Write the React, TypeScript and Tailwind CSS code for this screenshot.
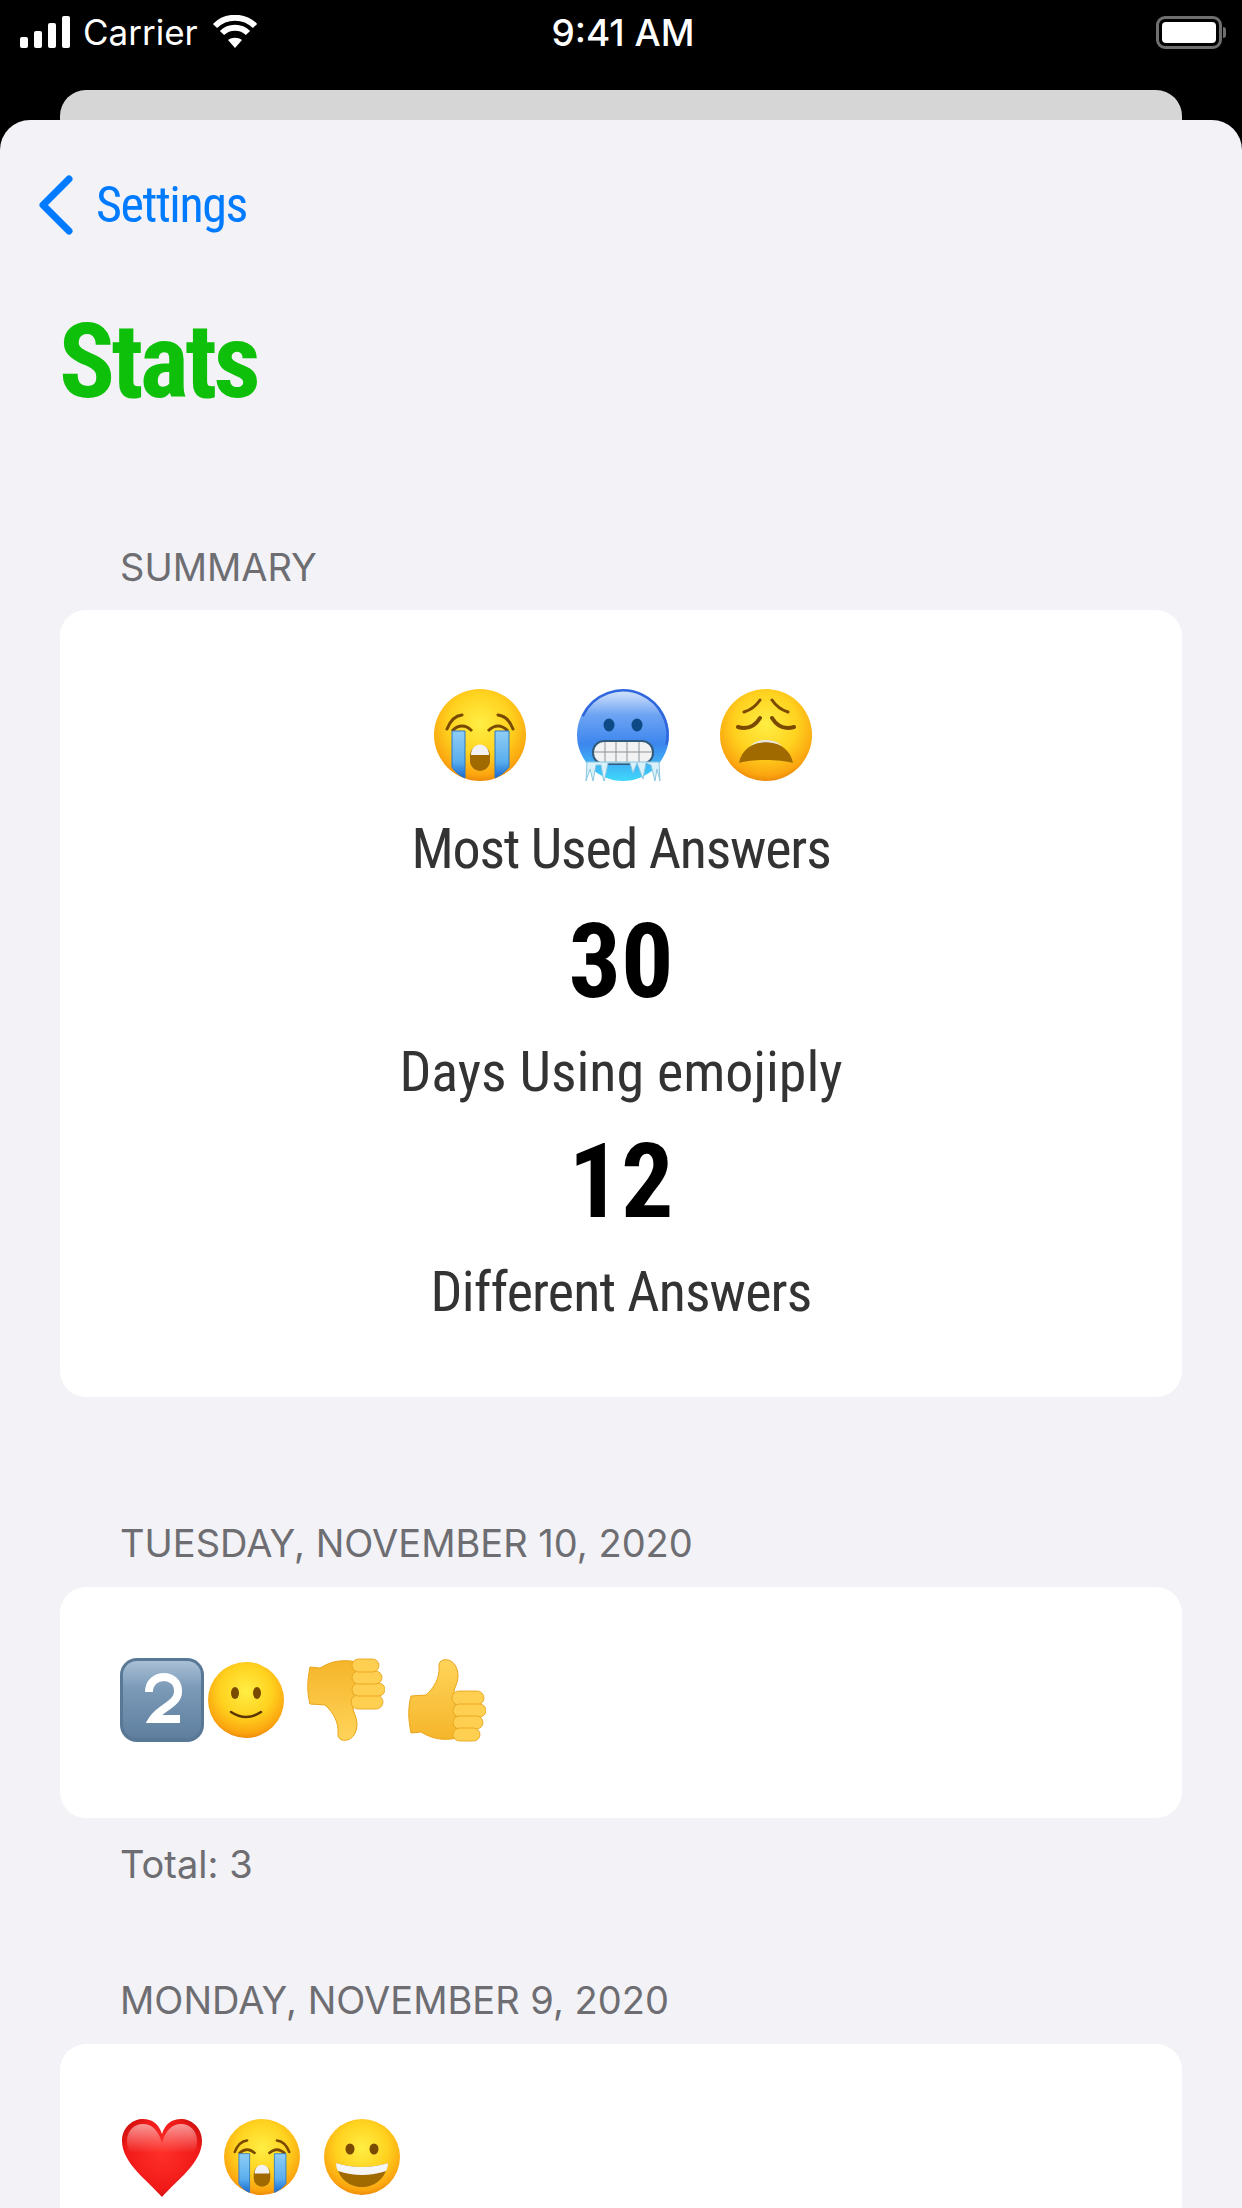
import { ReactNode } from 'react';

const condensed = "font-['Liberation_Sans_Narrow','Roboto_Condensed','Liberation_Sans',sans-serif]";
const plain = "font-['Inter','Liberation_Sans',sans-serif]";

function Defs() {
  return (
    <svg width="0" height="0" className="absolute">
      <defs>
        <radialGradient id="face" cx="50%" cy="38%" r="62%">
          <stop offset="0%" stopColor="#ffee44" />
          <stop offset="55%" stopColor="#ffd21f" />
          <stop offset="90%" stopColor="#fba50f" />
          <stop offset="100%" stopColor="#ee8a0a" />
        </radialGradient>
        <linearGradient id="cold" x1="0" y1="0" x2="0" y2="1">
          <stop offset="0%" stopColor="#dbe8fc" />
          <stop offset="28%" stopColor="#6ea4f3" />
          <stop offset="60%" stopColor="#3c86ee" />
          <stop offset="100%" stopColor="#3fd8fb" />
        </linearGradient>
        <linearGradient id="tear" x1="0" y1="0" x2="0" y2="1">
          <stop offset="0%" stopColor="#8fcdf5" />
          <stop offset="65%" stopColor="#5aaeee" />
          <stop offset="100%" stopColor="#1769d0" />
        </linearGradient>
        <linearGradient id="key" x1="0" y1="0" x2="0" y2="1">
          <stop offset="0%" stopColor="#a9c0d6" />
          <stop offset="35%" stopColor="#7b9ab8" />
          <stop offset="100%" stopColor="#5f7f9e" />
        </linearGradient>
        <linearGradient id="thumb" x1="0" y1="0" x2="0" y2="1">
          <stop offset="0%" stopColor="#ffd45a" />
          <stop offset="100%" stopColor="#f5b52a" />
        </linearGradient>
        <radialGradient id="heart" cx="50%" cy="45%" r="60%">
          <stop offset="0%" stopColor="#ff2f28" />
          <stop offset="75%" stopColor="#f01a18" />
          <stop offset="100%" stopColor="#c40d0d" />
        </radialGradient>
        <linearGradient id="shine" x1="0" y1="0" x2="0" y2="1">
          <stop offset="0%" stopColor="#ffffff" stopOpacity="0.55" />
          <stop offset="100%" stopColor="#ffffff" stopOpacity="0" />
        </linearGradient>
      </defs>
    </svg>
  );
}

function Crying({ size }: { size: number }) {
  return (
    <svg width={size} height={size} viewBox="0 0 92 92">
      <circle cx="46" cy="46" r="46" fill="url(#face)" />
      <path d="M13 40 Q18 27 28 26 M79 40 Q74 27 64 26" stroke="#7a4a00" strokeWidth="3" fill="none" strokeLinecap="round" />
      <path d="M18 42 Q28 32 38 42 M54 42 Q64 32 74 42" stroke="#7a4a00" strokeWidth="3" fill="none" />
      <path d="M18 42 H31 V89 Q22 85 18 78 Z" fill="url(#tear)" stroke="#2a78c8" strokeWidth="1" />
      <path d="M61 42 H75 V78 Q70 85 61 89 Z" fill="url(#tear)" stroke="#2a78c8" strokeWidth="1" />
      <rect x="36" y="56" width="20" height="26" rx="10" fill="#a06a00" />
      <path d="M37 66 C37 52 55 52 55 66 Z" fill="#f2f2f2" />
    </svg>
  );
}

function Cold({ size }: { size: number }) {
  return (
    <svg width={size} height={size} viewBox="0 0 92 92">
      <circle cx="46" cy="46" r="46" fill="url(#cold)" />
      <circle cx="46" cy="46" r="44.5" fill="none" stroke="#2f66dc" strokeWidth="2.5" strokeDasharray="130 160" transform="rotate(-155 46 46)" />
      <ellipse cx="32" cy="36" rx="5.5" ry="6.5" fill="#0d4a86" />
      <ellipse cx="60" cy="36" rx="5.5" ry="6.5" fill="#0d4a86" />
      <rect x="16" y="52" width="60" height="23" rx="11" fill="#f2f2f2" stroke="#335a7a" strokeWidth="2" />
      <path d="M28 53 V74 M39 53 V74 M50 53 V74 M62 53 V74 M17 63 H75" stroke="#8a939b" strokeWidth="1" />
      <path d="M10 73 L9 92 L13 80 L16 92 L19 76 L24 76 L27 94 L31 74 L53 74 L56 84 L60 74 L66 90 L69 74 L74 76 L78 92 L80 80 L83 92 L82 73 Z" fill="#d8f1fa" stroke="#8cc6e0" strokeWidth="1" />
    </svg>
  );
}

function Weary({ size }: { size: number }) {
  return (
    <svg width={size} height={size} viewBox="0 0 92 92">
      <circle cx="46" cy="46" r="46" fill="url(#face)" />
      <path d="M24 23 Q34 20 40 11 M68 23 Q58 20 52 11" stroke="#7a4a00" strokeWidth="3" fill="none" strokeLinecap="round" />
      <path d="M18 38 Q32 42 40 29 M74 38 Q60 42 52 29" stroke="#7a4a00" strokeWidth="4" fill="none" strokeLinecap="round" />
      <path d="M19 74 C24 46 68 46 73 74 C60 70 32 70 19 74 Z" fill="#a06a00" />
      <path d="M30 57 C38 49 54 49 62 57 C52 52 40 52 30 57 Z" fill="#e6e6e6" />
    </svg>
  );
}

function Keycap() {
  return (
    <svg width="84" height="84" viewBox="0 0 84 84">
      <rect width="84" height="84" rx="17" fill="#587896" />
      <rect x="3" y="3" width="78" height="77" rx="14" fill="url(#key)" />
      <path d="M29 34 C29 14 59 14 58 34 C58 46 40 50 33 61 H60" stroke="#ffffff" strokeWidth="8" fill="none" />
    </svg>
  );
}

function Smile({ size }: { size: number }) {
  return (
    <svg width={size} height={size} viewBox="0 0 76 76">
      <circle cx="38" cy="38" r="38" fill="url(#face)" />
      <ellipse cx="27" cy="31" rx="4" ry="6" fill="#7a4a00" />
      <ellipse cx="49" cy="31" rx="4" ry="6" fill="#7a4a00" />
      <path d="M23 50 Q38 60 53 50" stroke="#5a3600" strokeWidth="2.5" fill="none" strokeLinecap="round" />
    </svg>
  );
}

function ThumbUp({ flip }: { flip?: boolean }) {
  return (
    <svg width="78" height="84" viewBox="0 0 78 84" className={flip ? 'rotate-180 -scale-x-100' : ''}>
      <path d="M35 2 C44 0 50 8 50 18 C50 25 46 30 46 34 L50 80 C30 84 20 78 13 74 L3 75 C0 60 0 50 3 38 L18 37 C26 30 32 20 31 8 C31 5 32 3 35 2 Z" fill="url(#thumb)" stroke="#eaa51a" strokeWidth="1" />
      <rect x="44" y="33" width="32" height="14" rx="7" fill="#ffcf52" stroke="#e59f15" strokeWidth="0.8" />
      <rect x="45" y="46" width="33" height="13" rx="6.5" fill="#ffcf52" stroke="#e59f15" strokeWidth="0.8" />
      <rect x="45" y="58" width="30" height="13" rx="6.5" fill="#ffcf52" stroke="#e59f15" strokeWidth="0.8" />
      <rect x="45" y="70" width="27" height="13" rx="6.5" fill="#ffcf52" stroke="#e59f15" strokeWidth="0.8" />
    </svg>
  );
}

function Heart() {
  return (
    <svg width="80" height="78" viewBox="0 0 80 78">
      <path d="M40 78 C26 62 0 44 0 22 C0 8 11 0 21 0 C30 0 37 5 40 15 C43 5 50 0 59 0 C69 0 80 8 80 22 C80 44 54 62 40 78 Z" fill="url(#heart)" />
      <path d="M40 24 C37 12 30 5 21 5 C12 5 5 12 5 22 C5 26 6 30 8 34 L40 34 L72 34 C74 30 75 26 75 22 C75 12 68 5 59 5 C50 5 43 12 40 24 Z" fill="url(#shine)" />
    </svg>
  );
}

function Grin({ size }: { size: number }) {
  return (
    <svg width={size} height={size} viewBox="0 0 76 76">
      <circle cx="38" cy="38" r="38" fill="url(#face)" />
      <ellipse cx="26" cy="30" rx="4.5" ry="5.5" fill="#7a4a00" />
      <ellipse cx="50" cy="30" rx="4.5" ry="5.5" fill="#7a4a00" />
      <path d="M12 44 Q38 52 64 44 C62 60 50 68 38 68 C26 68 14 60 12 44 Z" fill="#a06a00" />
      <path d="M12 44 Q38 52 64 44 C64 48 63 50 62 52 Q38 60 14 52 C13 50 12 48 12 44 Z" fill="#f5f5f5" />
    </svg>
  );
}

function StatusBar() {
  return (
    <div className={`${plain} flex items-center justify-between h-[64px] pl-[20px] pr-[16px] text-white`}>
      <div className="flex items-center w-[420px]">
        <svg width="51" height="32" viewBox="0 0 51 32" fill="#fff">
          <rect x="0" y="21" width="8" height="11" rx="2" />
          <rect x="14" y="15" width="8" height="17" rx="2" />
          <rect x="28" y="7" width="8" height="25" rx="2" />
          <rect x="42" y="0" width="8" height="32" rx="2" />
        </svg>
        <span className="ml-[12px] text-[35px] leading-none">Carrier</span>
        <svg width="46" height="34" viewBox="0 0 46 34" className="ml-[14px]" fill="none" stroke="#fff" strokeWidth="6">
          <path d="M3 11 C14 0 32 0 43 11" />
          <path d="M10 18 C17 11 29 11 36 18" />
          <path d="M23 33 L16 25 C20 22 26 22 30 25 Z" fill="#fff" stroke="none" />
        </svg>
      </div>
      <span className="text-[37px] leading-none font-medium">9:41 AM</span>
      <div className="flex items-center justify-end w-[420px]">
        <div className="w-[66px] h-[33px] rounded-[9px] border-[3px] border-[#6f6f6f] p-[3px]">
          <div className="w-full h-full rounded-[4px] bg-white" />
        </div>
        <div className="w-[3px] h-[11px] ml-[1px] rounded-r-full bg-[#6f6f6f]" />
      </div>
    </div>
  );
}

function SectionLabel({ children, className = '' }: { children: ReactNode; className?: string }) {
  return <p className={`${plain} px-[120px] text-[38px] leading-[44px] text-[#6d6d72] ${className}`}>{children}</p>;
}

function Stat({ value, label, labelClass }: { value: string; label: string; labelClass: string }) {
  return (
    <>
      <p className={`${condensed} text-[104px] leading-[112px] font-bold text-black`}>{value}</p>
      <p className={`${condensed} mt-[-2px] text-[56px] leading-[112px] h-[110px] text-[#333333] ${labelClass}`}>{label}</p>
    </>
  );
}

export default function App() {
  return (
    <div className="relative w-[1242px] h-[2208px] overflow-hidden bg-black">
      <Defs />
      <StatusBar />
      <div className="mx-[60px] mt-[26px] h-[30px] rounded-t-[26px] bg-[#d6d6d6]" />
      <div className="rounded-t-[30px] bg-[#f2f2f7] h-[2088px]">
        <div className={`${condensed} flex items-center pt-[55px] pl-[38px] text-[#007aff]`}>
          <svg width="36" height="60" viewBox="0 0 36 60" fill="none" stroke="#007aff" strokeWidth="7" strokeLinecap="round" strokeLinejoin="round">
            <path d="M31 4 L5 30 L31 56" />
          </svg>
          <span className="ml-[22px] text-[50px] tracking-[-1.4px] leading-[60px]">Settings</span>
        </div>
        <h1 className={`${condensed} mt-[72px] pl-[59px] text-[104px] tracking-[-3.6px] leading-[110px] font-bold text-[#0fc00a]`}>Stats</h1>

        <SectionLabel className="mt-[128px]">SUMMARY</SectionLabel>
        <div className="mx-[60px] mt-[21px] h-[787px] rounded-[26px] bg-white flex flex-col items-center pt-[79px]">
          <div className="flex gap-[51px] pl-[3px]">
            <Crying size={92} />
            <Cold size={92} />
            <Weary size={92} />
          </div>
          <p className={`${condensed} mt-[11px] text-[56px] tracking-[-1.2px] leading-[114px] text-[#333333]`}>Most Used Answers</p>
          <Stat value="30" label="Days Using emojiply" labelClass="tracking-[0px]" />
          <Stat value="12" label="Different Answers" labelClass="tracking-[-0.85px]" />
        </div>

        <SectionLabel className="mt-[124px]">TUESDAY, NOVEMBER 10, 2020</SectionLabel>
        <div className="mx-[60px] mt-[22px] h-[231px] rounded-[26px] bg-white flex items-center pl-[60px] pb-[5px]">
          <Keycap />
          <div className="ml-[4px]"><Smile size={76} /></div>
          <div className="ml-[23px]"><ThumbUp flip /></div>
          <div className="ml-[23px]"><ThumbUp /></div>
        </div>
        <SectionLabel className="mt-[24px]">Total: 3</SectionLabel>

        <SectionLabel className="mt-[92px]">MONDAY, NOVEMBER 9, 2020</SectionLabel>
        <div className="mx-[60px] mt-[22px] h-[231px] rounded-[26px] bg-white flex items-start pt-[75px] pl-[62px]">
          <Heart />
          <div className="ml-[22px]"><Crying size={76} /></div>
          <div className="ml-[24px]"><Grin size={76} /></div>
        </div>
      </div>
    </div>
  );
}
